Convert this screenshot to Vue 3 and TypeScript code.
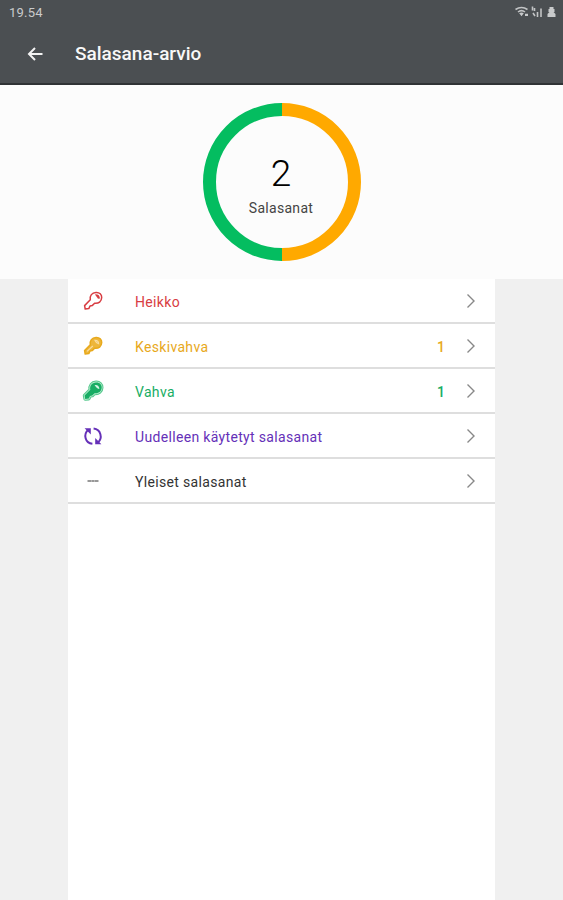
<script setup lang="ts">
type IconKind = 'weak' | 'medium' | 'strong' | 'reused' | 'common'

interface Category {
  icon: IconKind
  label: string
  count?: number
}

const total = 2
const categories: Category[] = [
  { icon: 'weak', label: 'Heikko' },
  { icon: 'medium', label: 'Keskivahva', count: 1 },
  { icon: 'strong', label: 'Vahva', count: 1 },
  { icon: 'reused', label: 'Uudelleen käytetyt salasanat' },
  { icon: 'common', label: 'Yleiset salasanat' },
]

const keyPath =
  'M4.2 20 L3.6 16.6 L9.3 10.8 C8.5 6.6 11 3.6 15 3.4 C18.6 3.2 20.8 5.4 20.7 8.6 C20.6 12.4 17.6 14.8 13.6 14.3 L11.2 16.6 L9 17 L7.8 19.6 Z'
</script>

<template>
  <div class="screen">
    <header class="top">
      <div class="status">
        <span class="time">19.54</span>
        <svg class="status-icons" width="43" height="14" viewBox="0 0 43 14">
          <path class="wifi" d="M.5 4.5Q6.5 .4 12.5 4.5M3 7Q6.5 4.1 10 7" />
          <path class="fill" d="M4.2 8.2Q6.5 6.7 8.8 8.2L6.5 11.2ZM10 8.7h3v2.2h-3Z" />
          <path class="signal" d="M17.5 1.5v4M19.5 3v3M18 8l2 3M22.5 7v5M26 3.5V12" />
          <path class="fill" d="M34.5 2h4v2h1v3h-1l2 2v3h-8V9l2-2h-1V4h1Z" />
        </svg>
      </div>
      <div class="bar">
        <svg class="back" width="16" height="16" viewBox="0 0 16 16">
          <path d="M15.5 8H2.5M8 2L2 8l6 6" />
        </svg>
        <h1>Salasana-arvio</h1>
      </div>
    </header>

    <section class="summary">
      <div class="donut">
        <svg class="ring" width="158" height="158" viewBox="0 0 158 158">
          <path class="ring-medium" d="M79 6.5a72.5 72.5 0 0 1 0 145" />
          <path class="ring-strong" d="M79 6.5a72.5 72.5 0 0 0 0 145" />
        </svg>
        <div class="total">
          <span class="number">{{ total }}</span>
          <span class="caption">Salasanat</span>
        </div>
      </div>
    </section>

    <main class="panel">
      <div v-for="item in categories" :key="item.icon" class="row" :class="item.icon">
        <svg class="icon" width="24" height="24" viewBox="0 0 24 24">
          <g v-if="item.icon === 'weak'">
            <path class="key" :d="keyPath" />
            <path class="solid" d="M14 5.4Q18.6 5 19 9.6L17 9.8Z" />
          </g>
          <g v-else-if="item.icon === 'medium'">
            <path class="key filled" :d="keyPath" />
            <path class="glint" d="M14 6.4Q17.6 6.4 17.6 9.8Q15.4 9.4 14 6.4ZM6 17.4L11.8 12" />
          </g>
          <g v-else-if="item.icon === 'strong'">
            <path class="halo" :d="keyPath" />
            <path class="gap" :d="keyPath" />
            <path class="solid" :d="keyPath" />
            <path class="hole" d="M13.6 6Q18 5.4 18.4 10Q16 10 13.6 6Z" />
          </g>
          <g v-else-if="item.icon === 'reused'">
            <path class="arc" d="M7 6C2.2 10.4 4 19 11.4 19.8M17 18.4C21.8 14 20 5.4 12.6 4.6" />
            <path class="solid" d="M3.6 4.2H9.8V10.4ZM20.4 20.2H14.2V14Z" />
          </g>
          <path v-else class="dashes" d="M6.5 12h3.5M10.3 12h3.4M14 12h3.5" />
        </svg>
        <span class="label">{{ item.label }}</span>
        <span class="count">{{ item.count }}</span>
        <svg class="chevron" width="10" height="16" viewBox="0 0 10 16">
          <path d="M1.5 1.5L8 8l-6.5 6.5" />
        </svg>
      </div>
    </main>
  </div>
</template>

<style>
body {
  background: #f0f0f0;
}
</style>

<style scoped>
.screen {
  display: flex;
  flex-direction: column;
  height: 900px;
  font-family: Roboto, "Liberation Sans", sans-serif;
  background: #f0f0f0;
  overflow: hidden;
}

svg {
  display: block;
  flex: none;
  fill: none;
}

.top {
  flex: none;
  box-sizing: border-box;
  height: 85px;
  background: #4b4f52;
  border-bottom: 2px solid #303335;
}

.status {
  display: flex;
  align-items: center;
  justify-content: space-between;
  height: 24px;
  padding: 0 5px 0 9px;
}

.time {
  font-size: 13px;
  line-height: 16px;
  letter-spacing: 0.25px;
  color: #c9cbcc;
  padding-top: 1px;
}

.wifi,
.signal {
  stroke: #c2c4c5;
  stroke-width: 1.6;
}

.fill {
  fill: #c8cacb;
}

.bar {
  display: flex;
  align-items: center;
  height: 59px;
  padding-left: 27px;
}

.back path {
  stroke: #f3f3f3;
  stroke-width: 2;
}

h1 {
  margin: 0 0 0 32px;
  font-size: 19px;
  line-height: 23px;
  font-weight: 500;
  color: #f8f8f8;
}

.summary {
  display: flex;
  flex: none;
  justify-content: center;
  box-sizing: border-box;
  height: 194px;
  padding: 18px 0 0 1px;
  background: #fcfcfc;
}

.donut {
  display: grid;
  width: 158px;
  height: 158px;
}

.ring,
.total {
  grid-area: 1 / 1;
}

.ring path {
  stroke-width: 13;
}

.ring-medium {
  stroke: #ffa900;
}

.ring-strong {
  stroke: #04bd60;
}

.total {
  display: flex;
  flex-direction: column;
  align-items: center;
  padding: 49px 2px 0 0;
}

.number {
  font-size: 37px;
  line-height: 44px;
  font-weight: 300;
  color: #000;
}

.caption {
  margin-top: 3px;
  font-size: 14px;
  line-height: 18px;
  letter-spacing: 0.3px;
  color: #444;
}

.panel {
  flex: 1;
  width: 427px;
  margin-left: 68px;
  background: #fff;
}

.row {
  display: flex;
  align-items: center;
  box-sizing: border-box;
  height: 45px;
  padding: 0 19px 0 13px;
  border-bottom: 2px solid #dedede;
  color: #333;
}

.label {
  flex: 1;
  margin-left: 30px;
  font-size: 14px;
  line-height: 18px;
  letter-spacing: 0.33px;
  padding-top: 3px;
}

.count {
  margin-right: 21px;
  font-size: 14px;
  line-height: 18px;
  font-weight: 500;
  padding-top: 3px;
}

.chevron path {
  stroke: #888;
  stroke-width: 1.4;
}

.weak {
  color: #d83d42;
}

.medium {
  color: #e8a91c;
}

.strong {
  color: #18ad64;
}

.reused {
  color: #6530b8;
}

.key {
  stroke: currentColor;
  stroke-width: 1.5;
  stroke-linejoin: round;
}

.filled {
  fill: #edb63b;
}

.solid {
  fill: currentColor;
}

.glint {
  stroke: #f9dda0;
  stroke-width: 1.1;
}

.halo {
  stroke: #54c88c;
  stroke-width: 3.6;
  stroke-linejoin: round;
}

.gap {
  stroke: #b9ecd0;
  stroke-width: 1.6;
}

.hole {
  fill: #d6f5e4;
}

.arc {
  stroke: currentColor;
  stroke-width: 2;
}

.dashes {
  stroke: #777;
  stroke-width: 1.4;
}
</style>
